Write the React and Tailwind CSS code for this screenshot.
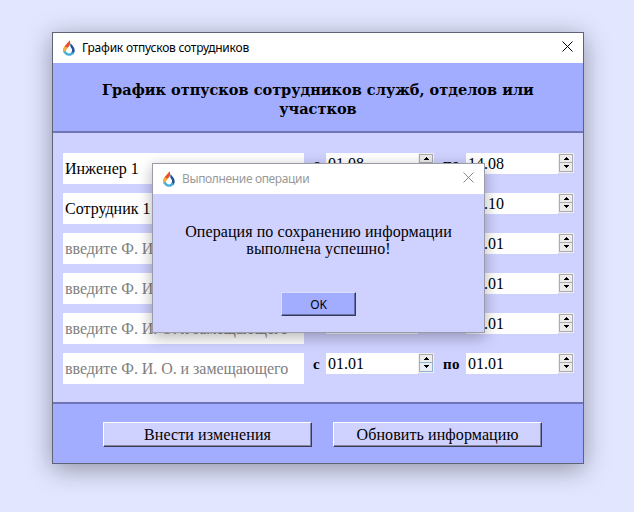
const ui = "font-['Noto_Sans','Open_Sans',sans-serif]";

const rows = [
  { name: 'Инженер 1', from: '01.08', to: '14.08' },
  { name: 'Сотрудник 1', from: '01.10', to: '14.10' },
  { name: '', from: '01.01', to: '01.01' },
  { name: '', from: '01.01', to: '01.01' },
  { name: '', from: '01.01', to: '01.01' },
  { name: '', from: '01.01', to: '01.01', hot: true },
];

function Flame() {
  return (
    <svg width="12" height="16" viewBox="0 0 12 16" fill="none" className="shrink-0">
      <path d="M6.700.2C5 2.800.3 6 .3 10.200c0 1 .2 1.800.5 2.500L3 11.500c-.8-2.500 2.700-4.300 3.700-6.200.7-1.700.6-3.500 0-5.100Z" fill="#e9502b" />
      <path d="M1.800 6.200C.8 7.500.3 8.800.3 10.300c0 1 .2 1.800.6 2.600l2.200-1.300c-.5-1.500.4-2.700 1.400-3.800Z" fill="#f6b33c" />
      <path d="M7.500 3.300c1.800 2 4.200 4 4.200 7 0 1.600-.6 3-1.700 4l-1.800-1.700c1.500-1.700 1.100-3.500-.3-5.100-.7-.8-.8-2.400-.4-4.200Z" fill="#1d5397" />
      <path d="M.5 11.600c.5 2.500 2.800 4.200 5.500 4.200 2.200 0 4.100-1.100 5-2.900l-2.300-1.100c-1.400 2.200-4.600 2.200-5.700-.5Z" fill="#45afd9" />
    </svg>
  );
}

function Close({ color }) {
  return (
    <svg width="11" height="11" viewBox="0 0 11 11" className="shrink-0">
      <path d="M.5.5l10 10M10.500.5l-10 10" stroke={color} strokeWidth="1" />
    </svg>
  );
}

function TitleBar({ title, inactive }) {
  return (
    <div className="flex h-[30px] shrink-0 items-center bg-white pl-[10px] pr-[10px]">
      <Flame />
      <span className={`${ui} ml-[7px] grow whitespace-nowrap text-[12px] leading-[16px] ${inactive ? 'tracking-[-0.36px] text-[#999]' : 'tracking-[-0.23px] text-black'}`}>{title}</span>
      <div className="-mt-[3px] flex">
        <Close color={inactive ? '#888' : '#000'} />
      </div>
    </div>
  );
}

function Arrow({ down }) {
  return (
    <svg width="5" height="3" viewBox="0 0 5 3" shapeRendering="crispEdges">
      <path d={down ? 'M0 0h5v1H0zM1 1h3v1H1zM2 2h1v1H2z' : 'M2 0h1v1H2zM1 1h3v1H1zM0 2h5v1H0z'} fill="#000" />
    </svg>
  );
}

function DateSpin({ value, hot }) {
  return (
    <div className="flex h-[21px] w-[108px] items-start">
      <div className="h-[21px] w-[92px] bg-white pl-[2px] text-[16px] leading-[22px]">{value}</div>
      <div className="flex h-[20px] w-4 flex-col border border-[#f0f0f0] bg-[#f0f0f0]">
        <div className="flex h-[9px] items-center justify-center border border-b-0 border-[#acacac] bg-[#ececec]"><Arrow /></div>
        <div className={`flex h-[10px] items-start justify-center border pt-[2px] ${hot ? 'border-[#93b0cd] bg-[#e8eef4]' : 'border-[#acacac] bg-[#ebebeb]'}`}><Arrow down /></div>
      </div>
    </div>
  );
}

function Row({ name, from, to, hot }) {
  return (
    <div className="flex h-[31px] items-start">
      <div className={`h-[31px] w-[241px] whitespace-nowrap bg-white pl-[2px] text-[16px] leading-[32px] ${name ? '' : 'tracking-[-0.05px] text-[#808080]'}`}>
        {name || 'введите Ф. И. О. и замещающего'}
      </div>
      <div className="w-[22px] pl-[9px] text-[15px] font-bold leading-[22px]">с</div>
      <DateSpin value={from} hot={hot} />
      <div className="w-8 pl-[9px] text-[15px] font-bold leading-[22px] tracking-[0.3px]">по</div>
      <DateSpin value={to} />
    </div>
  );
}

function FooterButton({ children }) {
  return (
    <button className="h-[25px] w-[209px] whitespace-nowrap border border-b-[#3c3c50] border-l-white border-r-[#3c3c50] border-t-white bg-[#cfd1ff] text-[16px] leading-[23px] tracking-[0.1px] shadow-[inset_-1px_-1px_#8484a4]">
      {children}
    </button>
  );
}

export default function App() {
  return (
    <div className="relative h-[512px] w-[634px] overflow-hidden bg-[#e2e6ff] pl-[52px] pt-[32px] font-['Liberation_Serif',serif] text-black">
      <div className="flex h-[432px] w-[532px] flex-col border border-[#5f6377] bg-[#cfd1ff] shadow-[0_5px_24px_rgba(0,0,0,0.36)]">
        <TitleBar title="График отпусков сотрудников" />
        <header className="h-[70px] border-b-2 border-[#7076b5] bg-[#a2adff] pt-[17px] text-center font-['DejaVu_Serif',serif] text-[14.5px] font-bold leading-[19px]">
          <div className="whitespace-nowrap">График отпусков сотрудников служб, отделов или</div>
          <div>участков</div>
        </header>
        <main className="flex h-[269px] flex-col gap-[9px] pl-[10px] pt-5">
          {rows.map((r, i) => <Row key={i} {...r} />)}
        </main>
        <footer className="flex h-[61px] gap-[21px] border-t-2 border-[#7076b5] bg-[#a2adff] pl-[50px] pt-[18px]">
          <FooterButton>Внести изменения</FooterButton>
          <FooterButton>Обновить информацию</FooterButton>
        </footer>
      </div>

      <div className="absolute left-[152px] top-[163px] flex h-[170px] w-[333px] flex-col items-stretch border border-[#999ba8] bg-[#cfd1ff] shadow-[0_4px_14px_rgba(0,0,0,0.3)]">
        <TitleBar title="Выполнение операции" inactive />
        <div className="pt-[29px] text-center text-[16px] leading-[17px] tracking-[0.08px]">
          <div>Операция по сохранению информации</div>
          <div>выполнена успешно!</div>
        </div>
        <button className={`${ui} ml-[128px] mt-[35px] h-6 w-[75px] border border-b-[#34385a] border-l-[#d8dcff] border-r-[#34385a] border-t-[#d8dcff] bg-[#a2adff] text-[12px] leading-[23px] tracking-[-0.2px] shadow-[inset_-1px_-1px_#6a71aa]`}>OK</button>
      </div>
    </div>
  );
}
